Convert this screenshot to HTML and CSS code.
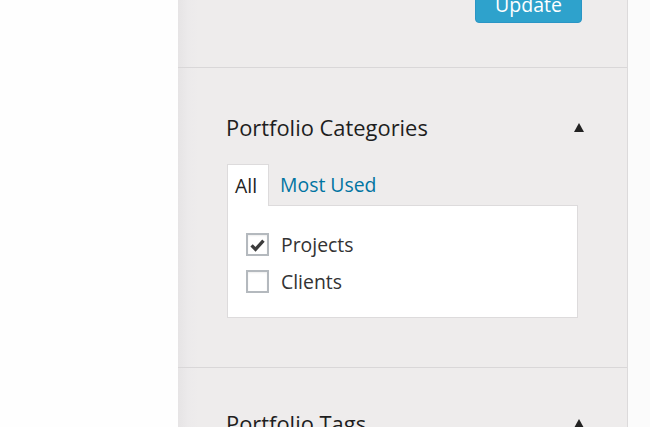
FILE: index.html
```html
<!DOCTYPE html>
<html>
<head>
<meta charset="utf-8">
<link rel="stylesheet" href="styles.css">
</head>
<body>
<div class="page">
  <div class="main"></div>
  <aside class="sidebar">
    <div class="box publish">
      <button class="btn-update">Update</button>
    </div>
    <div class="box">
      <div class="box-head">
        <h2>Portfolio Categories</h2>
        <span class="toggle"></span>
      </div>
      <div class="tabs">
        <span class="tab active">All</span>
        <span class="tab link">Most Used</span>
      </div>
      <div class="panel">
        <label class="item"><span class="cb checked"><svg viewBox="0 0 24 24" width="20" height="20"><path d="M4.5 12.5 L9.5 17.5 L19.5 6.5" fill="none" stroke="#3c3c3c" stroke-width="4.2" stroke-linecap="butt" stroke-linejoin="miter"/></svg></span>Projects</label>
        <label class="item"><span class="cb"></span>Clients</label>
      </div>
    </div>
    <div class="box tags">
      <div class="box-head">
        <h2>Portfolio Tags</h2>
        <span class="toggle"></span>
      </div>
    </div>
  </aside>
  <div class="edge"></div>
</div>
</body>
</html>
```
FILE: styles.css
```css
html, body {
  margin: 0;
  padding: 0;
  background: #ffffff;
  font-family: "Open Sans", "Noto Sans", sans-serif;
  overflow: hidden;
}
.page {
  display: flex;
  height: 427px;
}
.main {
  width: 178px;
  flex: none;
  background: #fefefe;
}
.sidebar {
  width: 449px;
  flex: none;
  background: linear-gradient(to right, #e6e4e5 0, #eceaeb 10px, #eeecec 20px);
  border-right: 1px solid #dcdadb;
  overflow: hidden;
}
.edge {
  flex: 1;
  background: #fbfbfb;
}
.box {
  border-bottom: 1px solid #d9d7d8;
  padding: 0 43px 49px 48px;
}
.publish {
  height: 67px;
  padding: 0 45px 0 0;
  display: flex;
  justify-content: flex-end;
  align-items: flex-start;
}
.btn-update {
  margin-top: -13px;
  width: 107px;
  height: 36px;
  background: #2ea2cc;
  border: 1px solid #2a95c5;
  border-radius: 4px;
  color: #fff;
  font-family: "Open Sans", sans-serif;
  font-size: 19.5px;
  padding: 0;
  line-height: 30px;
  box-shadow: inset 0 1px 0 rgba(120,200,230,0.5);
}
.box-head {
  display: flex;
  justify-content: space-between;
  align-items: center;
  padding-top: 44px;
  height: 30px;
}
.tags .box-head {
  padding-top: 40px;
}
.box-head h2 {
  margin: 0;
  font-size: 21.9px;
  font-weight: 400;
  color: #1e1e1e;
}
.toggle {
  width: 0;
  height: 0;
  border-left: 5.5px solid transparent;
  border-right: 5.5px solid transparent;
  border-bottom: 9px solid #222;
}
.tabs {
  display: flex;
  margin-top: 22px;
  padding-left: 1px;
  height: 42px;
  align-items: stretch;
}
.tab {
  font-size: 19.4px;
  display: flex;
  align-items: center;
  line-height: 1;
}
.tab.active {
  background: #fff;
  border: 1px solid #dddbdc;
  border-bottom: none;
  padding: 0 11px 0 7px;
  color: #222;
  position: relative;
  z-index: 1;
}
.tab.link {
  color: #0074a2;
  padding-left: 11px;
}
.panel {
  background: #fff;
  border: 1px solid #dddbdc;
  margin-top: -1px;
  margin-left: 1px;
  width: 351px;
  height: 113px;
  box-sizing: border-box;
  padding: 27px 0 0 18px;
}
.item {
  display: flex;
  align-items: center;
  font-size: 19.4px;
  color: #333;
  height: 23px;
  margin-bottom: 14px;
}
.cb {
  width: 19px;
  height: 19px;
  border: 2px solid #b4b9be;
  background: #fff;
  margin-right: 12px;
  display: flex;
  align-items: center;
  justify-content: center;
  box-shadow: inset 0 1px 2px rgba(0,0,0,0.07);
}
```
